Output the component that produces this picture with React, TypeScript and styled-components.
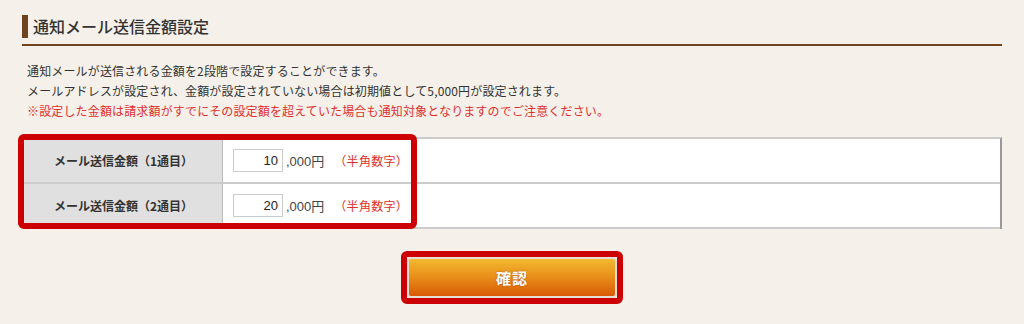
import React from "react";
import styled, { createGlobalStyle } from "styled-components";

const Global = createGlobalStyle`
  html, body { margin: 0; padding: 0; background: #f5f1ea; }
  body { font-family: "Liberation Sans", "Noto Sans CJK JP", sans-serif; color: #333; }
  * { box-sizing: border-box; }
`;

const Page = styled.div`
  padding: 15px 22px 20px 22px;
  width: 1024px;
`;

const Title = styled.h2`
  margin: 0;
  padding-bottom: 6px;
  border-bottom: 2px solid #6e4320;
`;

const TitleText = styled.span`
  display: block;
  border-left: 6px solid #6e4320;
  padding-left: 5px;
  font-size: 16px;
  font-weight: 500;
  line-height: 23px;
  color: #333;
  font-family: "Noto Sans CJK JP", sans-serif;
`;

const Desc = styled.div`
  padding: 15px 0 0 5px;
  font-size: 12px;
  line-height: 20px;
  letter-spacing: 0.15px;
  color: #333;
  font-family: "Noto Sans CJK JP", sans-serif;
`;

const Line = styled.p<{ $warn?: boolean }>`
  margin: 0;
  color: ${(p) => (p.$warn ? "#e0302e" : "#333")};
`;

const TableWrap = styled.div`
  position: relative;
  margin: 16px 0 0 1px;
`;

const Table = styled.div`
  display: grid;
  grid-template-columns: 200px 1fr;
  background: #fff;
  border-top: 2px solid #ccc;
  border-right: 2px solid #999;
`;

const HeadCell = styled.div`
  background: #e0e0e0;
  height: 45px;
  display: flex;
  align-items: center;
  justify-content: center;
  padding-left: 2px;
  font-size: 12px;
  font-weight: 700;
  color: #333;
  font-family: "Noto Sans CJK JP", sans-serif;
  border-right: 1px solid #bbb;
  border-bottom: 2px solid #ccc;
`;

const DataCell = styled.div`
  height: 45px;
  display: flex;
  align-items: center;
  padding-left: 10px;
  border-bottom: 2px solid #ccc;
  font-size: 12px;
`;

const Input = styled.input`
  width: 50px;
  height: 23px;
  border: 1px solid #ccc;
  background: #fff;
  text-align: right;
  padding: 0 4px 0 0;
  font-size: 13px;
  font-family: "Liberation Sans", sans-serif;
  color: #222;
  outline: none;
`;

const Unit = styled.span`
  margin-left: 3px;
  font-size: 13px;
  color: #444;
  font-family: "Liberation Sans", "Noto Sans CJK JP", sans-serif;
`;

const Note = styled.span`
  margin-left: 10px;
  font-size: 12px;
  letter-spacing: 0.3px;
  color: #e0302e;
  font-family: "Noto Sans CJK JP", sans-serif;
`;

const Highlight = styled.div`
  position: absolute;
  left: -5px;
  top: -3px;
  width: 399px;
  height: 95px;
  border: 6px solid #cc0000;
  border-radius: 6px;
  pointer-events: none;
`;

const ButtonRow = styled.div`
  display: flex;
  justify-content: center;
  margin-top: 22px;
`;

const ButtonRing = styled.div`
  border: 6px solid #cc0000;
  border-radius: 6px;
  display: flex;
`;

const Button = styled.button`
  width: 210px;
  height: 41px;
  border: 2px solid #e4ddd5;
  border-radius: 4px;
  background: linear-gradient(to bottom, #f3b92f 0%, #e88d1a 50%, #d85a05 100%);
  color: #fff;
  font-size: 15px;
  font-weight: 700;
  font-family: "Noto Sans CJK JP", sans-serif;
  text-shadow: 0 0 2px rgba(120, 50, 0, 0.5);
  letter-spacing: 1px;
  cursor: pointer;
`;

const rows = [
  { label: "メール送信金額（1通目）", value: "10" },
  { label: "メール送信金額（2通目）", value: "20" },
];

export default function App() {
  return (
    <Page>
      <Global />
      <Title>
        <TitleText>通知メール送信金額設定</TitleText>
      </Title>
      <Desc>
        <Line>通知メールが送信される金額を2段階で設定することができます。</Line>
        <Line>メールアドレスが設定され、金額が設定されていない場合は初期値として5,000円が設定されます。</Line>
        <Line $warn>※設定した金額は請求額がすでにその設定額を超えていた場合も通知対象となりますのでご注意ください。</Line>
      </Desc>
      <TableWrap>
        <Table>
          {rows.map((r) => (
            <React.Fragment key={r.label}>
              <HeadCell>{r.label}</HeadCell>
              <DataCell>
                <Input defaultValue={r.value} />
                <Unit>,000円</Unit>
                <Note>（半角数字）</Note>
              </DataCell>
            </React.Fragment>
          ))}
        </Table>
        <Highlight />
      </TableWrap>
      <ButtonRow>
        <ButtonRing>
          <Button>確認</Button>
        </ButtonRing>
      </ButtonRow>
    </Page>
  );
}
